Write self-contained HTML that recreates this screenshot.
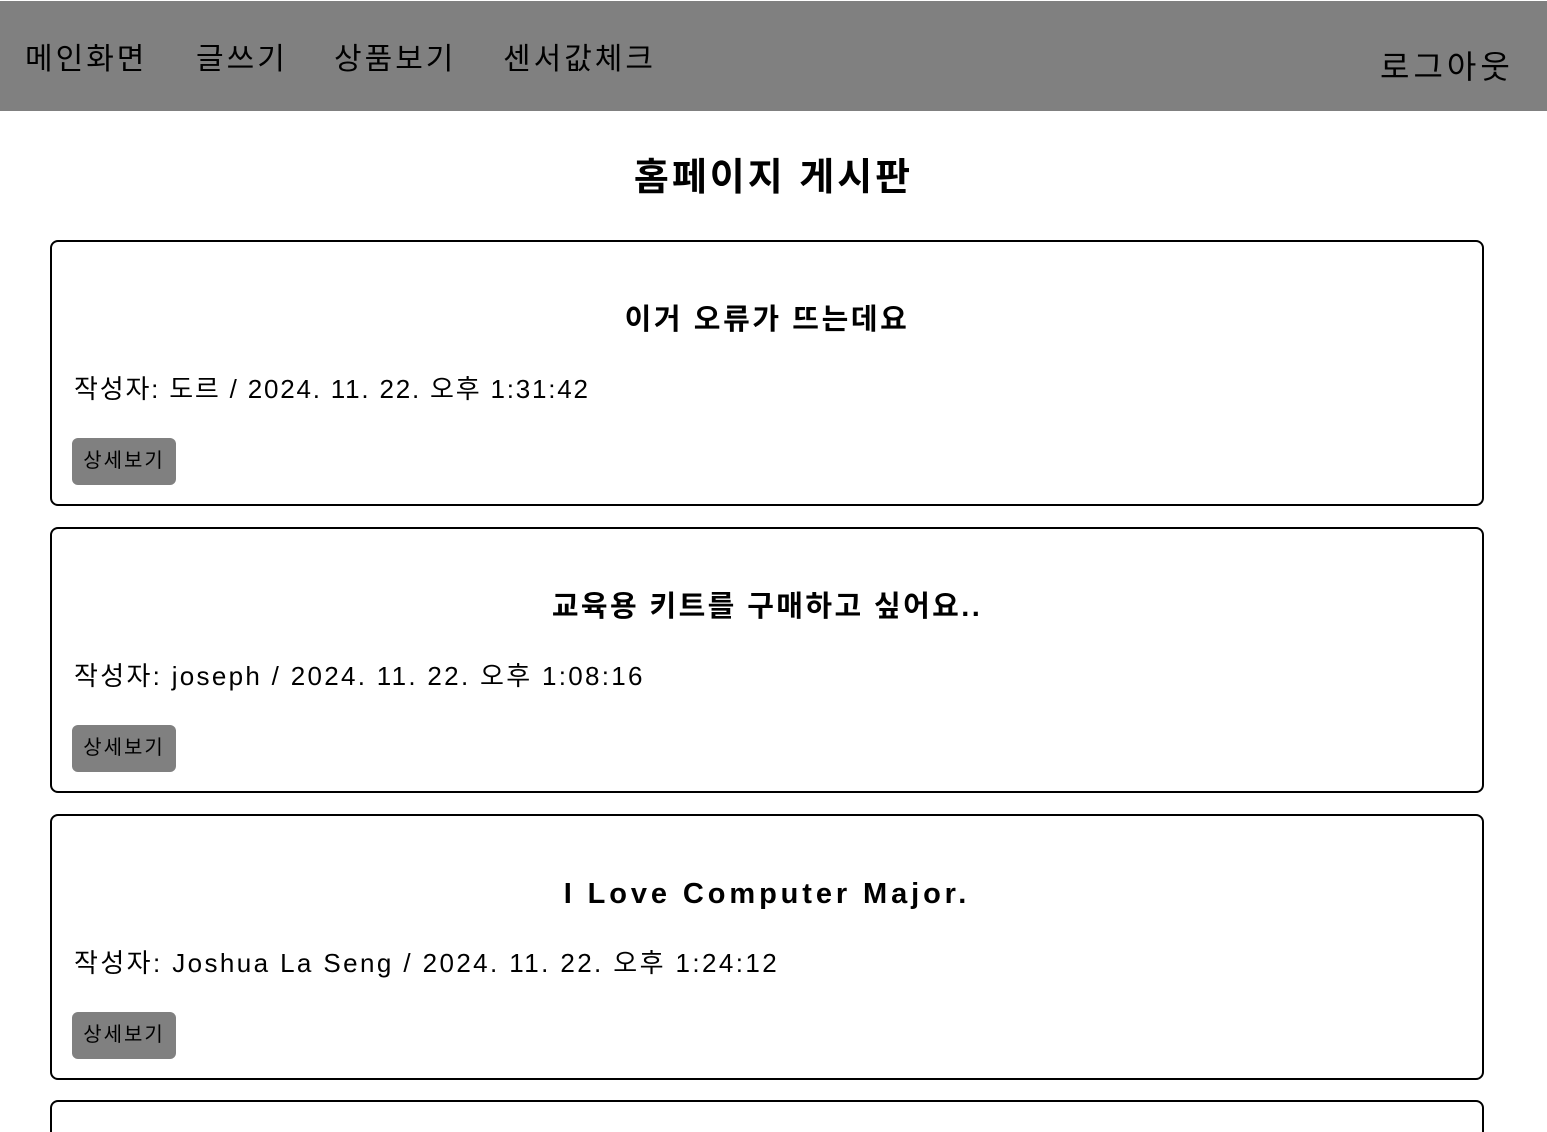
<!DOCTYPE html>
<html><head><meta charset="utf-8">
<style>
*{box-sizing:border-box;margin:0;padding:0}
html,body{width:1547px;height:1132px;overflow:hidden}
body{position:relative;background:#fff;font-family:"Liberation Sans","Noto Sans CJK KR",sans-serif;color:#000}
nav{position:absolute;top:1px;left:0;width:1547px;height:110px;background:#808080}
nav .it{position:absolute;top:39px;font-size:30px;line-height:40px;color:#000;letter-spacing:3px}
h1{position:absolute;top:153px;left:0;width:1547px;text-align:center;font-size:38px;font-weight:bold;line-height:50px;letter-spacing:3px}
.card{position:absolute;left:50px;width:1434px;height:266px;border:2px solid #000;border-radius:8px}
.card h2{position:absolute;top:58px;left:0;width:100%;text-align:center;font-size:29px;font-weight:bold;line-height:40px;letter-spacing:2.6px}
.card p{position:absolute;top:129px;left:22px;font-size:26px;line-height:36px;letter-spacing:2px}
.card .b{position:absolute;top:196px;left:20px;width:104px;height:47px;background:#808080;border-radius:6px;font-size:20px;line-height:47px;text-align:center;letter-spacing:2px}
</style></head><body>
<nav>
<span class="it" style="left:25px">메인화면</span>
<span class="it" style="left:196px">글쓰기</span>
<span class="it" style="left:334px">상품보기</span>
<span class="it" style="left:503px">센서값체크</span>
<span class="it" style="left:1380px;top:46px;font-size:32px;letter-spacing:4px">로그아웃</span>
</nav>
<h1>홈페이지 게시판</h1>
<div class="card" style="top:240px"><h2>이거 오류가 뜨는데요</h2><p style="letter-spacing:1.8px">작성자: 도르 / 2024. 11. 22. 오후 1:31:42</p><div class="b">상세보기</div></div>
<div class="card" style="top:527px"><h2 style="letter-spacing:2.4px">교육용 키트를 구매하고 싶어요..</h2><p style="letter-spacing:2.3px">작성자: joseph / 2024. 11. 22. 오후 1:08:16</p><div class="b">상세보기</div></div>
<div class="card" style="top:814px"><h2 style="letter-spacing:3.9px">I Love Computer Major.</h2><p style="letter-spacing:2.4px">작성자: Joshua La Seng / 2024. 11. 22. 오후 1:24:12</p><div class="b">상세보기</div></div>
<div class="card" style="top:1100px;height:32px;border-bottom:none;border-radius:8px 8px 0 0"></div>
</body></html>
